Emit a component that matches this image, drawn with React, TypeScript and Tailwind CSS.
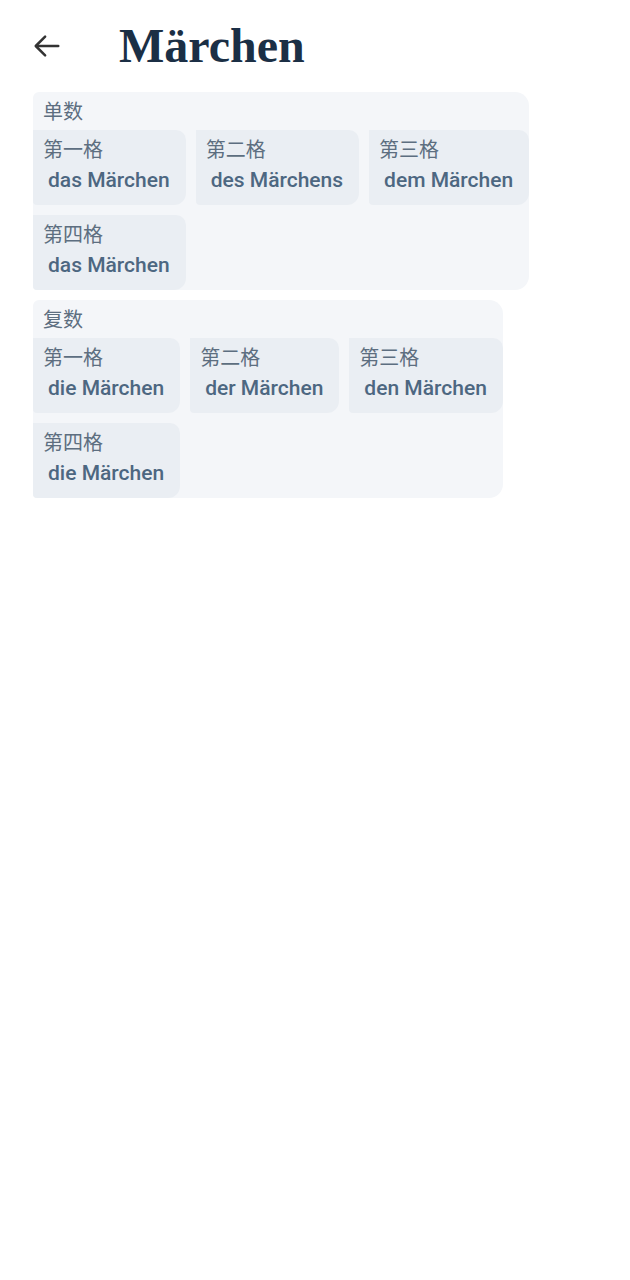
import React from "react";

type Case = { label: string; form: string };
type Group = { title: string; cases: Case[] };

const groups: Group[] = [
  {
    title: "单数",
    cases: [
      { label: "第一格", form: "das Märchen" },
      { label: "第二格", form: "des Märchens" },
      { label: "第三格", form: "dem Märchen" },
      { label: "第四格", form: "das Märchen" },
    ],
  },
  {
    title: "复数",
    cases: [
      { label: "第一格", form: "die Märchen" },
      { label: "第二格", form: "der Märchen" },
      { label: "第三格", form: "den Märchen" },
      { label: "第四格", form: "die Märchen" },
    ],
  },
];

const cjk = "font-['Roboto','Noto_Sans_CJK_SC',sans-serif]";

function CaseChip({ c }: { c: Case }) {
  return (
    <div className="flex flex-col bg-[#eaeef3] rounded-tr-[10px] rounded-br-[12px] rounded-bl-[4px] pl-[10px] pr-[11px] pt-[7px] pb-[11px]">
      <div className={`${cjk} text-[20px] leading-[26px] text-[#5d6e80]`}>{c.label}</div>
      <div className="mt-[3px] px-[5px] font-['Roboto',sans-serif] font-medium text-[21px] leading-[28px] text-[#4d6781] whitespace-nowrap">
        {c.form}
      </div>
    </div>
  );
}

function GroupCard({ g }: { g: Group }) {
  return (
    <div className="w-fit bg-[#f4f6f9] rounded-tl-[6px] rounded-bl-[4px] rounded-r-[14px] pt-[8px]">
      <div className={`${cjk} pl-[10px] text-[20px] leading-[24px] text-[#5d6e80] mb-[6px]`}>{g.title}</div>
      <div className="grid grid-cols-[auto_auto_auto] gap-x-[10px] gap-y-[10px]">
        {g.cases.map((c, i) => (
          <CaseChip key={i} c={c} />
        ))}
      </div>
    </div>
  );
}

export default function App() {
  return (
    <div className="min-h-[1280px] w-full bg-white">
      <header className="flex items-center h-[92px] pl-[32px]">
        <button className="w-[30px] h-[30px] flex items-center justify-center text-[#333]" aria-label="back">
          <svg width="30" height="30" viewBox="0 0 24 24" fill="none" stroke="currentColor" strokeWidth="2" strokeLinecap="round" strokeLinejoin="round">
            <path d="M21 12H3.5" />
            <path d="M10.5 4.5L3 12l7.5 7.5" />
          </svg>
        </button>
        <h1 className="ml-[57px] font-['Liberation_Serif',serif] font-bold text-[48px] leading-none text-[#1b2f45]">
          Märchen
        </h1>
      </header>
      <main className="pl-[33px] flex flex-col gap-[10px]">
        {groups.map((g, i) => (
          <GroupCard key={i} g={g} />
        ))}
      </main>
    </div>
  );
}
